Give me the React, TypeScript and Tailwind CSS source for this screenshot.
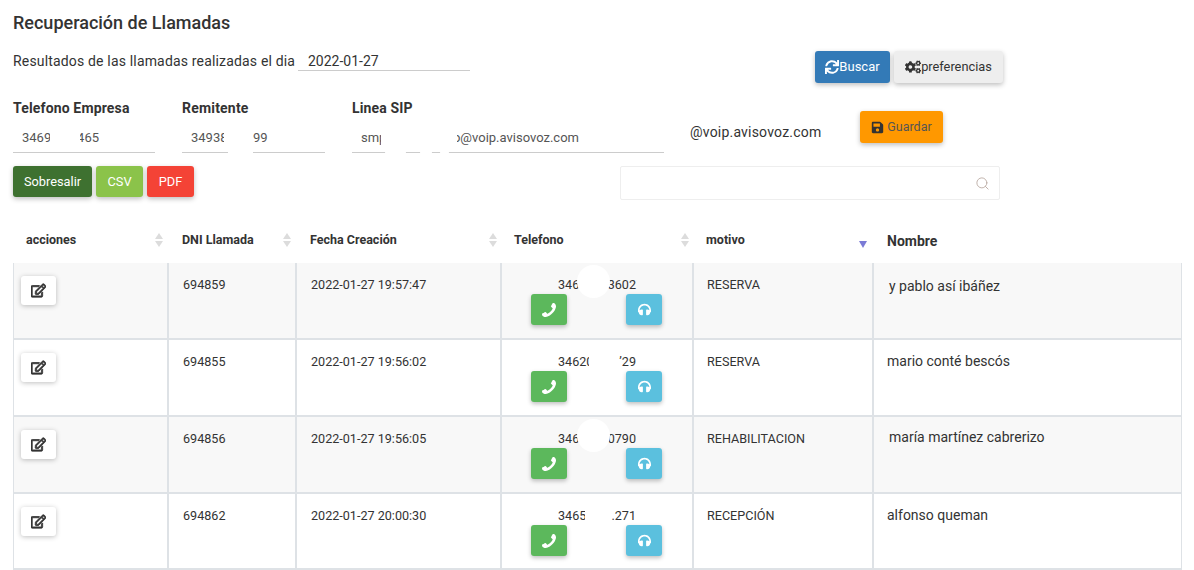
import { FaCogs, FaHeadphones, FaRegEdit, FaSave, FaSync } from 'react-icons/fa';
import { FiSearch } from 'react-icons/fi';

interface Row {
  dni: string;
  fecha: string;
  telA: string;
  telAClass: string;
  telB: string;
  blob: boolean;
  motivo: string;
  nombre: string;
  nombreClass: string;
  height: string;
}

const ROWS: Row[] = [
  { dni: '694859', fecha: '2022-01-27 19:57:47', telA: '346', telAClass: 'w-[21px]', telB: '3602', blob: true, motivo: 'RESERVA', nombre: 'y pablo así ibáñez', nombreClass: 'pl-[15px] pt-[14px]', height: 'h-[77px]' },
  { dni: '694855', fecha: '2022-01-27 19:56:02', telA: '34620', telAClass: 'w-[31px]', telB: '\u201929', blob: false, motivo: 'RESERVA', nombre: 'mario conté bescós', nombreClass: 'pl-[13px] pt-[12px]', height: 'h-[77px]' },
  { dni: '694856', fecha: '2022-01-27 19:56:05', telA: '346', telAClass: 'w-[21px]', telB: '0790', blob: true, motivo: 'REHABILITACION', nombre: 'maría martínez cabrerizo', nombreClass: 'pl-[15px] pt-[11px]', height: 'h-[77px]' },
  { dni: '694862', fecha: '2022-01-27 20:00:30', telA: '3465', telAClass: 'w-[27px]', telB: '.271', blob: false, motivo: 'RECEPCIÓN', nombre: 'alfonso queman', nombreClass: 'pl-[13px] pt-[12px]', height: 'h-[76px]' },
];

function SortIcon({ active }: { active?: boolean }) {
  if (active) {
    return (
      <svg width="8" height="7" viewBox="0 0 8 7" className="absolute top-[19px] left-[166px]">
        <path d="M0 0h8L4 7z" fill="#7b7bd6" />
      </svg>
    );
  }
  return (
    <svg width="8" height="14" viewBox="0 0 8 14">
      <path d="M4 0l4 6H0z" fill="#dcdcdc" />
      <path d="M0 8h8l-4 6z" fill="#dcdcdc" />
    </svg>
  );
}

// font awesome 4 handset, mirrored like in the screen
function PhoneIcon() {
  return (
    <svg width="14" height="14" viewBox="0 0 1408 1408" fill="currentColor" className="scale-x-[-1]">
      <path d="M1408 1112q0 27-10 70.5t-21 68.5q-21 50-122 106-94 51-186 51-27 0-53-3.5t-57.5-12.5-47-14.5-55.5-20.5-49-18q-98-35-175-83-127-79-264-216t-216-264q-48-77-83-175-3-9-18-49t-20.5-55.5-14.5-47-12.5-57.5-3.5-53q0-92 51-186 56-101 106-122 25-11 68.5-21t70.5-10q14 0 21 3 18 6 53 76 11 19 30 54t35 63.5 31 53.5q3 4 17.5 25t21.5 35.5 7 28.5q0 20-28.5 50t-62 55-62 53-28.5 46q0 9 5 22.5t8.5 20.5 14 24 11.5 19q76 137 174 235t235 174q2 1 19 11.5t24 14 20.5 8.5 22.5 5q18 0 46-28.5t53-62 55-62 50-28.5q14 0 28.5 7t35.5 21.5 25 17.5q25 15 53.5 31t63.5 35 54 30q70 35 76 53 3 7 3 21z" />
    </svg>
  );
}

export default function App() {
  return (
    <div className="h-[570px] w-[1194px] overflow-hidden bg-white pl-[13px] font-['Roboto',sans-serif] text-[#333]">
      <h1 className="pt-[12px] text-[18px] leading-[21px] font-medium">Recuperación de Llamadas</h1>

      <div className="mt-[4px] flex h-[48px] items-start">
        <div className="flex w-[802px] pt-[14px] text-[14px] leading-[20px]">
          <span className="w-[285px] tracking-[0.17px]">Resultados de las llamadas realizadas el dia</span>
          <div className="h-[20px] w-[172px] border-b border-[#ccc] pl-[10px]">2022-01-27</div>
        </div>
        <button className="mt-[14px] flex h-[32px] w-[75px] items-center justify-center rounded-[3px] bg-[#337ab7] text-[13px] text-white shadow-[0_2px_5px_rgba(0,0,0,0.25)]">
          <FaSync className="text-[14px]" />
          Buscar
        </button>
        <button className="mt-[14px] ml-[4px] flex h-[32px] w-[109px] items-center justify-center rounded-[3px] bg-[#eee] text-[12.8px] text-[#333] shadow-[0_2px_5px_rgba(0,0,0,0.25)]">
          <FaCogs className="text-[16px]" />
          preferencias
        </button>
      </div>

      <div className="mt-[14px] flex h-[55px]">
        <div className="w-[169px]">
          <div className="text-[14px] leading-[18px] font-bold tracking-[0.15px]">Telefono Empresa</div>
          <div className="mt-[9px] flex h-[27px] w-[142px] border-b border-[#ccc] pt-[2px] pl-[9px] text-[13px] leading-[20px] text-[#555]">
            <span className="w-[28px] overflow-hidden">3469</span>
            <span className="ml-[30px] flex w-[19px] justify-end overflow-hidden">465</span>
          </div>
        </div>
        <div className="w-[170px]">
          <div className="text-[14px] leading-[18px] font-bold tracking-[0.2px]">Remitente</div>
          <div className="mt-[9px] flex h-[27px] text-[13px] leading-[20px] text-[#555]">
            <div className="h-[27px] w-[46px] border-b border-[#ccc] pt-[2px] pl-[9px]">
              <span className="block w-[33px] overflow-hidden">34938</span>
            </div>
            <div className="ml-[25px] h-[27px] w-[72px] border-b border-[#ccc] pt-[2px]">99</div>
          </div>
        </div>
        <div className="w-[338px]">
          <div className="text-[14px] leading-[18px] font-bold tracking-[0.15px]">Linea SIP</div>
          <div className="relative mt-[9px] flex h-[27px] w-[312px] border-b border-[#ccc] pt-[2px] pl-[9px] text-[13px] leading-[20px] text-[#555]">
            <span className="w-[20px] overflow-hidden">smp</span>
            <span className="ml-[76px] flex w-[122px] justify-end overflow-hidden whitespace-nowrap">o@voip.avisovoz.com</span>
            <span className="absolute top-[25px] left-[33px] h-[3px] w-[21px] rounded-full bg-white" />
            <span className="absolute top-[25px] left-[68px] h-[3px] w-[12px] rounded-full bg-white" />
            <span className="absolute top-[25px] left-[88px] h-[3px] w-[9px] rounded-full bg-white" />
          </div>
        </div>
        <div className="w-[170px] pt-[23px] text-[14px] leading-[20px] tracking-[0.2px]">@voip.avisovoz.com</div>
        <button className="mt-[12px] flex h-[32px] w-[83px] items-center justify-center gap-[3px] rounded-[3px] bg-[#ff9800] text-[12.5px] text-[#555] shadow-[0_2px_5px_rgba(0,0,0,0.25)]">
          <FaSave className="text-[13px] text-[#333]" />
          Guardar
        </button>
      </div>

      <div className="mt-[12px] flex h-[34px] items-start">
        <div className="flex w-[607px] gap-[4px] text-[12.8px] text-white">
          <button className="h-[31px] w-[79px] rounded-[3px] bg-[#3e7130] shadow-[0_2px_5px_rgba(0,0,0,0.25)]">Sobresalir</button>
          <button className="h-[31px] w-[47px] rounded-[3px] bg-[#8bc34a] shadow-[0_2px_5px_rgba(0,0,0,0.25)]">CSV</button>
          <button className="h-[31px] w-[47px] rounded-[3px] bg-[#f44336] shadow-[0_2px_5px_rgba(0,0,0,0.25)]">PDF</button>
        </div>
        <div className="flex h-[34px] w-[380px] items-center justify-end rounded-[2px] border border-[#eee] pr-[9px]">
          <FiSearch className="text-[15px] text-[#b8a8a0]" strokeWidth={1.4} />
        </div>
      </div>

      <div className="mt-[22px] w-[1169px]">
        <div className="grid h-[41px] grid-cols-[155px_128px_205px_192px_180px_309px] text-[12.5px] font-bold">
          <div className="flex items-center justify-between pr-[5px] pb-[5px] pl-[13px]">
            acciones
            <SortIcon />
          </div>
          <div className="flex items-center justify-between pr-[5px] pb-[5px] pl-[14px]">
            DNI Llamada
            <SortIcon />
          </div>
          <div className="flex items-center justify-between pr-[4px] pb-[5px] pl-[14px]">
            Fecha Creación
            <SortIcon />
          </div>
          <div className="flex items-center justify-between pr-[4px] pb-[5px] pl-[13px]">
            Telefono
            <SortIcon />
          </div>
          <div className="relative flex items-center pb-[5px] pl-[13px]">
            motivo
            <SortIcon active />
          </div>
          <div className="flex items-center pb-[3px] pl-[14px] text-[14px] font-bold">Nombre</div>
        </div>

        {ROWS.map((row, i) => (
          <div
            key={row.dni}
            className={`grid grid-cols-[155px_128px_205px_192px_180px_308px] border-b-2 border-l border-[#dee2e6] text-[12.6px] ${row.height} ${i % 2 === 0 ? 'bg-[#f8f8f8]' : 'bg-white'}`}
          >
            <div className="border-r-2 border-[#dee2e6] pt-[13px] pl-[7px]">
              <button className="flex h-[29px] w-[35px] items-center justify-center rounded-[3px] bg-white text-[15px] text-[#333] shadow-[0_1px_5px_rgba(0,0,0,0.25)]">
                <FaRegEdit stroke="currentColor" strokeWidth={30} />
              </button>
            </div>
            <div className="border-r-2 border-[#dee2e6] pt-[14px] pl-[14px] leading-[16px]">{row.dni}</div>
            <div className="border-r-2 border-[#dee2e6] pt-[14px] pl-[14px] leading-[16px]">{row.fecha}</div>
            <div className="relative border-r-2 border-[#dee2e6] pt-[14px] leading-[16px]">
              <div className="ml-[56px] flex w-[78px] justify-between">
                <span className={`overflow-hidden ${row.telAClass}`}>{row.telA}</span>
                <span>{row.telB}</span>
              </div>
              {row.blob && <span className="absolute top-[2px] left-[75px] h-[33px] w-[33px] rounded-full bg-white" />}
              <div className="mt-[1px] flex pl-[29px]">
                <button className="flex h-[31px] w-[36px] items-center justify-center rounded-[3px] bg-[#5cb85c] text-white shadow-[0_2px_4px_rgba(0,0,0,0.25)]">
                  <PhoneIcon />
                </button>
                <button className="ml-[59px] flex h-[31px] w-[36px] items-center justify-center rounded-[3px] bg-[#5bc0de] text-[13px] text-white shadow-[0_2px_4px_rgba(0,0,0,0.25)]">
                  <FaHeadphones />
                </button>
              </div>
            </div>
            <div className="border-r-2 border-[#dee2e6] pt-[14px] pl-[13px] leading-[16px]">{row.motivo}</div>
            <div className={`border-r border-[#dee2e6] text-[14px] leading-[18px] ${row.nombreClass}`}>{row.nombre}</div>
          </div>
        ))}
      </div>
    </div>
  );
}
